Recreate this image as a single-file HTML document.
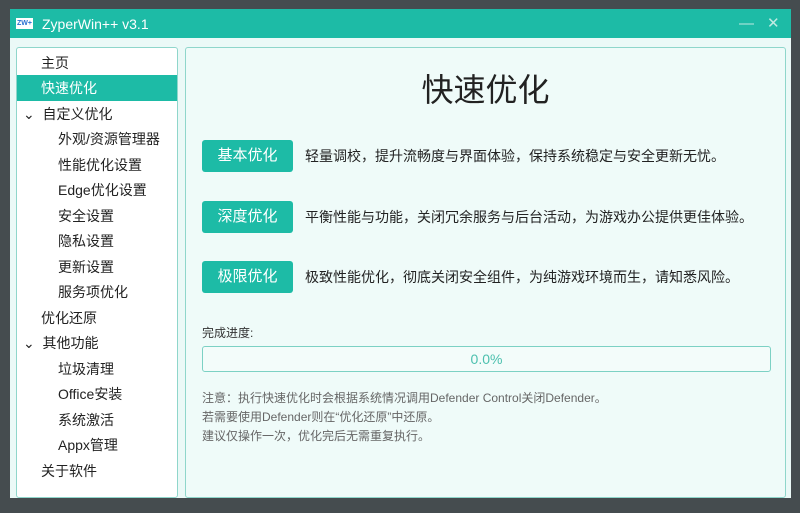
<!DOCTYPE html>
<html><head><meta charset="utf-8"><style>
*{margin:0;padding:0;box-sizing:border-box}
body{width:800px;height:513px;background:#454c4f;position:relative;overflow:hidden;font-family:"Liberation Sans","Noto Sans CJK SC",sans-serif}
.win{position:absolute;left:10px;top:9px;width:781px;height:489px;background:#ebf9f7}
.title{height:29px;background:#1dbba6;color:#fff;font-size:14px;display:flex;align-items:center;padding-left:6px}
.logo{width:17px;height:11px;background:#fff;color:#2a6fd0;font-size:7px;font-weight:bold;line-height:11px;text-align:center;margin-right:9px}
.ctl{position:absolute;top:0;height:29px;color:#bfeae2;font-size:15px;line-height:29px;font-weight:300}
.side{position:absolute;left:6px;top:38px;width:162px;height:451px;background:#fff;border:1px solid #8fd6cb;border-radius:3px}
.it{position:absolute;left:0;width:160px;height:26px;line-height:26px;font-size:14px;color:#222}
.sel{background:#1dbba6;color:#fff}
.main{position:absolute;left:175px;top:38px;width:601px;height:451px;background:#effbf9;border:1px solid #8fd6cb;border-radius:3px}
h1{position:absolute;left:0;width:100%;text-align:center;top:17px;font-size:32px;font-weight:normal;color:#222}
.btn{position:absolute;left:16px;width:91px;height:32px;background:#1dbba6;color:#fff;font-size:15px;line-height:32px;text-align:center;border-radius:3px}
.desc{position:absolute;left:119px;font-size:14px;color:#222;line-height:32px}
.bar{position:absolute;left:16px;top:298px;width:569px;height:26px;border:1px solid #7cd1c4;border-radius:3px;background:#f3fcfa;text-align:center;color:#4cc0ae;font-size:14px;line-height:24px}
.note{position:absolute;left:16px;top:341px;font-size:12px;color:#666;line-height:19px}
</style></head><body>
<div class="win">
<div class="title"><div class="logo">ZW+</div>ZyperWin++ v3.1</div>
<div class="ctl" style="left:729px">—</div>
<div class="ctl" style="left:757px">✕</div>
<div class="side">
<div class="it" style="top:2px;padding-left:24px">主页</div>
<div class="it sel" style="top:27px;padding-left:24px">快速优化</div>
<div class="it" style="top:53px;padding-left:6px">⌄&nbsp; 自定义优化</div>
<div class="it" style="top:78px;padding-left:41px">外观/资源管理器</div>
<div class="it" style="top:104px;padding-left:41px">性能优化设置</div>
<div class="it" style="top:129px;padding-left:41px">Edge优化设置</div>
<div class="it" style="top:155px;padding-left:41px">安全设置</div>
<div class="it" style="top:180px;padding-left:41px">隐私设置</div>
<div class="it" style="top:206px;padding-left:41px">更新设置</div>
<div class="it" style="top:231px;padding-left:41px">服务项优化</div>
<div class="it" style="top:257px;padding-left:24px">优化还原</div>
<div class="it" style="top:282px;padding-left:6px">⌄&nbsp; 其他功能</div>
<div class="it" style="top:308px;padding-left:41px">垃圾清理</div>
<div class="it" style="top:333px;padding-left:41px">Office安装</div>
<div class="it" style="top:359px;padding-left:41px">系统激活</div>
<div class="it" style="top:384px;padding-left:41px">Appx管理</div>
<div class="it" style="top:410px;padding-left:24px">关于软件</div>
</div>
<div class="main">
<h1>快速优化</h1>
<div class="btn" style="top:92px">基本优化</div><div class="desc" style="top:92px">轻量调校，提升流畅度与界面体验，保持系统稳定与安全更新无忧。</div>
<div class="btn" style="top:153px">深度优化</div><div class="desc" style="top:153px">平衡性能与功能，关闭冗余服务与后台活动，为游戏办公提供更佳体验。</div>
<div class="btn" style="top:213px">极限优化</div><div class="desc" style="top:213px">极致性能优化，彻底关闭安全组件，为纯游戏环境而生，请知悉风险。</div>
<div style="position:absolute;left:16px;top:276px;font-size:12px;color:#333">完成进度:</div>
<div class="bar">0.0%</div>
<div class="note">注意：执行快速优化时会根据系统情况调用Defender Control关闭Defender。<br>若需要使用Defender则在“优化还原”中还原。<br>建议仅操作一次，优化完后无需重复执行。</div>
</div>
</div>
</body></html>
